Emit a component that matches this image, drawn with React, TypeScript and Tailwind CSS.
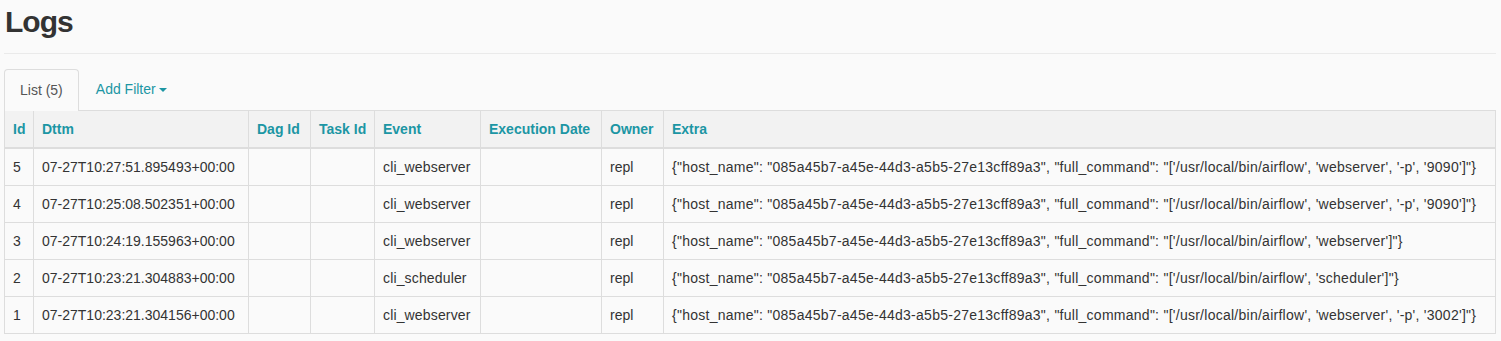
import React from 'react';

interface LogRow {
  id: number;
  dttm: string;
  dagId: string;
  taskId: string;
  event: string;
  executionDate: string;
  owner: string;
  extra: string;
}

const host = '"host_name": "085a45b7-a45e-44d3-a5b5-27e13cff89a3"';

const logs: LogRow[] = [
  {
    id: 5,
    dttm: '07-27T10:27:51.895493+00:00',
    dagId: '',
    taskId: '',
    event: 'cli_webserver',
    executionDate: '',
    owner: 'repl',
    extra: `{${host}, "full_command": "['/usr/local/bin/airflow', 'webserver', '-p', '9090']"}`,
  },
  {
    id: 4,
    dttm: '07-27T10:25:08.502351+00:00',
    dagId: '',
    taskId: '',
    event: 'cli_webserver',
    executionDate: '',
    owner: 'repl',
    extra: `{${host}, "full_command": "['/usr/local/bin/airflow', 'webserver', '-p', '9090']"}`,
  },
  {
    id: 3,
    dttm: '07-27T10:24:19.155963+00:00',
    dagId: '',
    taskId: '',
    event: 'cli_webserver',
    executionDate: '',
    owner: 'repl',
    extra: `{${host}, "full_command": "['/usr/local/bin/airflow', 'webserver']"}`,
  },
  {
    id: 2,
    dttm: '07-27T10:23:21.304883+00:00',
    dagId: '',
    taskId: '',
    event: 'cli_scheduler',
    executionDate: '',
    owner: 'repl',
    extra: `{${host}, "full_command": "['/usr/local/bin/airflow', 'scheduler']"}`,
  },
  {
    id: 1,
    dttm: '07-27T10:23:21.304156+00:00',
    dagId: '',
    taskId: '',
    event: 'cli_webserver',
    executionDate: '',
    owner: 'repl',
    extra: `{${host}, "full_command": "['/usr/local/bin/airflow', 'webserver', '-p', '3002']"}`,
  },
];

const columns = [
  { label: 'Id', width: 'w-[29px]' },
  { label: 'Dttm', width: 'w-[215px]' },
  { label: 'Dag Id', width: 'w-[62px]' },
  { label: 'Task Id', width: 'w-[64px]' },
  { label: 'Event', width: 'w-[106px]' },
  { label: 'Execution Date', width: 'w-[121px]' },
  { label: 'Owner', width: 'w-[62px]' },
  { label: 'Extra', width: '' },
];

const cell = 'border border-[#ddd] px-[8px] py-[8px] leading-[20px]';

export default function App() {
  return (
    <div className="min-h-[341px] bg-[#fafafa] pl-[4px] pr-[5px] font-['Liberation_Sans',Arial,sans-serif] text-[14px] text-[#333]">
      {/* タイトル */}
      <h1 className="pt-[2px] pl-[1px] text-[30px] leading-[40px] font-bold tracking-[-1px] text-[#333]">Logs</h1>
      <div className="mt-[11px] border-t border-[#eaeaea]" />

      {/* タブ */}
      <div className="mt-[15px] flex items-end border-b border-[#ddd]">
        <div className="-mb-px flex h-[42px] items-center rounded-t-[4px] border border-b-0 border-[#ddd] bg-[#fafafa] px-[15px] text-[#555]">
          List (5)
        </div>
        <button className="flex h-[41px] items-center gap-[3px] px-[17px] text-[#1c96a4]">
          <span>Add Filter</span>
          <span className="mt-[1px] inline-block h-0 w-0 border-x-[4px] border-t-[4px] border-x-transparent border-t-[#1c96a4]" />
        </button>
      </div>

      {/* テーブル */}
      <table className="w-full table-fixed border-collapse border border-t-0 border-[#ddd]">
        <colgroup>
          {columns.map((c) => (
            <col key={c.label} className={c.width} />
          ))}
        </colgroup>
        <thead className="bg-[#f2f2f2]">
          <tr>
            {columns.map((c) => (
              <th
                key={c.label}
                className="border border-t-0 border-b-2 border-[#ddd] px-[8px] py-[8px] text-left text-[14px] leading-[20px] font-bold whitespace-nowrap text-[#1c96a4]"
              >
                {c.label}
              </th>
            ))}
          </tr>
        </thead>
        <tbody>
          {logs.map((log) => (
            <tr key={log.id}>
              <td className={cell}>{log.id}</td>
              <td className={`${cell} whitespace-nowrap`}>{log.dttm}</td>
              <td className={cell}>{log.dagId}</td>
              <td className={cell}>{log.taskId}</td>
              <td className={`${cell} tracking-[0.15px]`}>{log.event}</td>
              <td className={cell}>{log.executionDate}</td>
              <td className={cell}>{log.owner}</td>
              <td className={`${cell} whitespace-nowrap tracking-[0.26px]`}>{log.extra}</td>
            </tr>
          ))}
        </tbody>
      </table>
    </div>
  );
}
